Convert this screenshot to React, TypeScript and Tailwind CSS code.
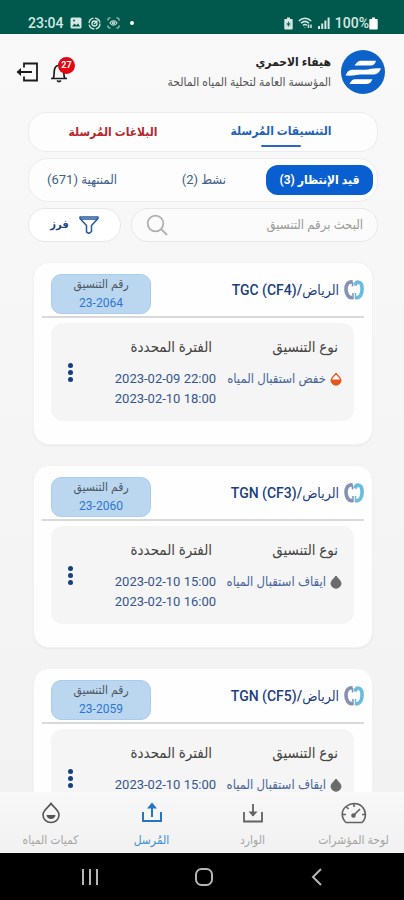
import type { ReactNode } from "react";

type Request = {
  id: string;
  site: string;
  type: string;
  reduced: boolean;
  from: string;
  to: string;
};

const requests: Request[] = [
  {
    id: "23-2064",
    site: "TGC (CF4)/الرياض",
    type: "خفض استقبال المياه",
    reduced: true,
    from: "2023-02-09 22:00",
    to: "2023-02-10 18:00",
  },
  {
    id: "23-2060",
    site: "TGN (CF3)/الرياض",
    type: "ايقاف استقبال المياه",
    reduced: false,
    from: "2023-02-10 15:00",
    to: "2023-02-10 16:00",
  },
  {
    id: "23-2059",
    site: "TGN (CF5)/الرياض",
    type: "ايقاف استقبال المياه",
    reduced: false,
    from: "2023-02-10 15:00",
    to: "2023-02-10 16:00",
  },
];

const StatusBar = () => (
  <div
    dir="ltr"
    className="flex h-[34px] shrink-0 items-end justify-between bg-[#00594c] pr-[26px] pb-1 pl-7 text-[14px] leading-[14px] font-medium text-[#d5e8e4]"
  >
    <div className="flex items-center gap-[6px]">
      <span>23:04</span>
      <svg width="12" height="12" viewBox="0 0 12 12">
        <rect x="0.5" y="0.5" width="11" height="11" rx="1.5" fill="currentColor" />
        <path d="M2 9.5l2.5-3 1.8 1.8L8 6.5l2.2 3z" fill="#00594c" />
        <circle cx="4" cy="3.5" r="1" fill="#00594c" />
      </svg>
      <svg width="13" height="13" viewBox="0 0 13 13" fill="none" stroke="currentColor" strokeWidth="1.3">
        <circle cx="6.5" cy="6.5" r="5.5" strokeDasharray="7 1.6" />
        <circle cx="6.5" cy="6.5" r="2.5" />
        <path d="M6 7l3.5-3.5" />
      </svg>
      <svg width="13" height="12" viewBox="0 0 13 12" fill="none" stroke="currentColor" strokeWidth="1.1">
        <path d="M1 3.5V1h2.5M9.5 1H12v2.5M12 8.5V11H9.5M3.5 11H1V8.5" strokeDasharray="2 1" />
        <path d="M3 6c2-3 5-3 7 0-2 3-5 3-7 0z" />
        <circle cx="6.5" cy="6" r="1" />
      </svg>
      <span className="ml-1 size-1 rounded-full bg-white" />
    </div>
    <div className="flex items-center gap-[5px]">
      <svg width="9" height="13" viewBox="0 0 9 13">
        <path d="M3 0.5h3V2h2q0.7 0 0.7 0.7v9.1q0 0.7-0.7 0.7H1q-0.7 0-0.7-0.7V2.7Q0.3 2 1 2h2z" fill="currentColor" />
        <path d="M4.5 4.5v5M2.6 6.2l3.8 2M2.6 8.2l3.8-2" stroke="#00594c" strokeWidth="0.8" />
      </svg>
      <svg width="15" height="12" viewBox="0 0 15 12" fill="none" stroke="currentColor" strokeWidth="1.5">
        <path d="M0.8 4c3.6-3.7 8.8-3.7 12.4 0M3 6.3c2.4-2.3 5.6-2.3 8 0M5 8.5c1.3-1.2 2.7-1.2 4 0" />
        <path d="M7 10.5v0.5M10.5 11V7.5M13 7.5V11" />
      </svg>
      <svg width="12" height="12" viewBox="0 0 12 12" fill="currentColor">
        <path d="M0 9h2v3H0zM3.2 6.5h2V12h-2zM6.4 3.5h2V12h-2zM9.6 0.5h2V12h-2z" />
      </svg>
      <span className="flex items-center">
        100%
        <svg width="9" height="13" viewBox="0 0 9 13" fill="white">
          <path d="M3 0.5h3V2h2q0.7 0 0.7 0.7v9.1q0 0.7-0.7 0.7H1q-0.7 0-0.7-0.7V2.7Q0.3 2 1 2h2z" />
        </svg>
      </span>
    </div>
  </div>
);

const Header = () => (
  <header className="flex items-center justify-between pt-4 pr-[19px] pl-4">
    <div className="flex items-center gap-[10px]">
      <svg width="44" height="44" viewBox="0 0 44 44" aria-hidden="true">
        <circle cx="22" cy="22" r="22" fill="#0c62c9" />
        <g fill="#fff">
          <path d="M16.5 12q1.2-1.3 3-1.3H35q-1.200 4.800-5 4.800H13.500q1.200-2 3-3.500z" />
          <path d="M4.500 25.500q2-5.500 6.500-5.800h13q3 0 6-0.900 3-0.800 10-0.500-2 6-7 6.200H20q-3 0-6 0.700-3 0.700-9.500 0.300z" />
          <path d="M8.500 34q2-4.800 5.500-4.800h17.500q-1.500 3.200-3 4-1.500 0.800-3.500 0.800z" />
        </g>
      </svg>
      <div>
        <h1 className="text-[12px] leading-5 font-bold text-[#252525]">هيفاء الاحمري</h1>
        <p className="text-[12px] leading-5 text-[#555]">المؤسسة العامة لتحلية المياه المالحة</p>
      </div>
    </div>
    <div className="flex items-center gap-3">
      <button className="relative" aria-label="الإشعارات">
        <svg width="18" height="22" viewBox="0 0 18 22" fill="none" stroke="#1c1c1c" strokeWidth="1.7">
          <path d="M1 17.5h16M3 17.5c1.5-2 1-5 1.300-8C4.700 6 6.500 4.500 9 4.500s4.300 1.500 4.700 5c0.300 3-0.200 6 1.300 8M9 4.500V2.500" />
          <path d="M7 19.5q2 2 4 0" />
        </svg>
        <span className="absolute -top-1 left-2 flex size-[17px] items-center justify-center rounded-full bg-[#e30613] text-[9px] font-bold text-white">
          27
        </span>
      </button>
      <button aria-label="خروج">
        <svg width="22" height="20" viewBox="0 0 22 20" fill="none" stroke="#1c1c1c" strokeWidth="1.8">
          <path d="M8 5.5V1.5h13v17H8v-4M2 10h14" />
          <path d="M0.5 10L5 6v8z" fill="#1c1c1c" stroke="none" />
        </svg>
      </button>
    </div>
  </header>
);

const Filters = () => (
  <div className="mt-[18px] flex flex-col gap-[6px] pr-[26px] pl-7">
    <nav className="flex h-10 rounded-[18px] border border-[#ececec] bg-[#fdfdfd] pr-3 text-[12px] font-bold">
      <button className="flex flex-1 flex-col items-center justify-between pt-2 pb-1 text-[#1d62b8]">
        <span className="leading-5">التنسيقات المُرسلة</span>
        <span className="h-[2px] w-10 rounded-full bg-[#2c67c0]" />
      </button>
      <button className="flex-1 text-[#b5272d]">البلاغات المُرسلة</button>
    </nav>

    <div className="flex h-11 items-center gap-10 rounded-[20px] border border-[#ececec] bg-[#fdfdfd] pr-1 pl-[18px] text-[13px] text-[#3f5f86]">
      <button className="h-[30px] w-[107px] rounded-[12px] bg-[#0a5fd0] text-[12px] font-bold text-white">
        قيد الإنتظار (3)
      </button>
      <button>نشط (2)</button>
      <button className="mr-auto">المنتهية (671)</button>
    </div>

    <div className="flex h-[34px] gap-[10px]">
      <label className="flex min-w-0 flex-1 items-center rounded-full border border-[#e8e8e8] bg-[#fbfbfb] px-[14px]">
        <input
          type="text"
          aria-label="البحث برقم التنسيق"
          placeholder="البحث برقم التنسيق"
          className="min-w-0 flex-1 bg-transparent text-[13px] outline-none placeholder:text-[#9a9a9a]"
        />
        <svg width="22" height="22" viewBox="0 0 22 22" fill="none" stroke="#b0b0b0" strokeWidth="1.8">
          <circle cx="9.5" cy="9.5" r="7.8" />
          <path d="M15 15l6 6" />
        </svg>
      </label>
      <button className="flex w-[93px] items-center justify-center gap-[10px] rounded-full border border-[#e8e8e8] bg-white text-[11px] font-bold text-[#1f4181]">
        <svg width="20" height="18" viewBox="0 0 20 18" fill="none" stroke="#245a9c" strokeWidth="1.5">
          <path d="M1 1h18v1.5L12.5 9.5v6L10 17.500 7.500 16V9.500L1 2.500zM1 3h18" strokeLinejoin="round" />
        </svg>
        <span>فرز</span>
      </button>
    </div>
  </div>
);

const SiteLogo = () => (
  <svg width="20" height="22" viewBox="0 0 20 22" fill="none" strokeWidth="3.6" aria-hidden="true">
    <path d="M8.5 3C4 2 2 6 2 10.5S4.500 19.500 9 18.500" stroke="#8493b5" />
    <path d="M8.5 3v4.5M9 14v6" stroke="#8493b5" strokeWidth="1.5" />
    <path d="M11 6.5C12 2 17.500 1.500 18 8.500S16 19 11.500 19" stroke="#69bcdc" />
    <path d="M11.5 14v6" stroke="#69bcdc" strokeWidth="1.5" />
  </svg>
);

const Drop = ({ reduced }: { reduced: boolean }) => (
  <svg width="12" height="14" viewBox="0 0 12 14" aria-hidden="true">
    <path
      d="M6 1C8 4 11 5.500 11 8.500a5 4.700 0 0 1-10 0C1 5.500 4 4 6 1z"
      fill={reduced ? "#e2581d" : "#6b6b6b"}
      stroke={reduced ? "#e2581d" : "#6b6b6b"}
    />
    {reduced && <path d="M6 2.500C7.500 4.500 9.500 6 9.900 7.500H2.100C2.500 6 4.500 4.500 6 2.500z" fill="#fff" />}
  </svg>
);

const RequestCard = ({ request }: { request: Request }) => (
  <article className="shrink-0 rounded-[16px] border border-[#f3f3f3] bg-[#fefefe] px-2 pt-[11px] pb-[23px] shadow-xs">
    <div className="flex items-center justify-between border-b-2 border-[#d9d9d9] pb-[2px] pl-[9px]">
      <div className="flex items-center gap-[5px] pb-2">
        <SiteLogo />
        <h2 dir="ltr" className="text-[14px] font-medium text-[#1b3f80]">
          {request.site}
        </h2>
      </div>
      <div className="h-10 w-[100px] rounded-[10px] border border-[#a9cdee] bg-[#bbd7f0] text-center text-[12px] leading-[19px]">
        <p className="text-[#4c5660]">رقم التنسيق</p>
        <p className="text-[#2d76ce]">{request.id}</p>
      </div>
    </div>

    <div className="mt-[5px] mr-[10px] ml-[9px] flex h-[98px] rounded-[12px] bg-[#f5f5f5] pt-[14px] pr-3">
      <div className="w-[126px] shrink-0">
        <h3 className="mb-3 pr-1 text-[15px] leading-5 text-[#444]">نوع التنسيق</h3>
        <p className="flex items-center gap-1 text-[13px] leading-5 whitespace-nowrap text-[#4a659b]">
          <Drop reduced={request.reduced} />
          {request.type}
        </p>
      </div>
      <div className="flex-1">
        <h3 className="mb-3 pr-1 text-[15px] leading-5 text-[#444]">الفترة المحددة</h3>
        <p dir="ltr" className="text-right text-[13px] leading-5 whitespace-nowrap text-[#34558e]">
          {request.from}
          <br />
          {request.to}
        </p>
      </div>
      <button className="flex w-[38px] flex-col items-center justify-center gap-[2px] pb-[14px]" aria-label="خيارات">
        <span className="size-[5px] rounded-full bg-[#123f85]" />
        <span className="size-[5px] rounded-full bg-[#123f85]" />
        <span className="size-[5px] rounded-full bg-[#123f85]" />
      </button>
    </div>
  </article>
);

const NavItem = ({ label, active, children }: { label: string; active?: boolean; children: ReactNode }) => (
  <button
    className={`flex flex-1 flex-col items-center gap-[6px] text-[12px] leading-5 whitespace-nowrap ${
      active ? "text-[#3d8ed0]" : "text-[#a5a5a5]"
    }`}
  >
    {children}
    <span>{label}</span>
  </button>
);

const BottomNav = () => (
  <nav className="flex h-[61px] shrink-0 bg-linear-to-b from-[#f8f8f8] to-[#f1f1f1] pt-[10px]">
    <NavItem label="لوحة المؤشرات">
      <svg width="26" height="22" viewBox="0 0 26 22" fill="none" stroke="#626262" strokeWidth="1.6">
        <path d="M5 20.5C0 16 0 8.500 5 4.500s12-4 16 0 5 11.500 0 16z" strokeLinejoin="round" />
        <path d="M13 2v3M5.500 5l2 2M2 12.500h3M24 12.500h-3" />
        <path d="M12 14l7-7" />
        <circle cx="12.5" cy="13.5" r="1.5" fill="#626262" />
      </svg>
    </NavItem>
    <NavItem label="الوارد">
      <svg width="22" height="22" viewBox="0 0 22 22" fill="none" stroke="#626262" strokeWidth="1.8">
        <path d="M2 10v9.500h18V10M11 2v12" />
        <path d="M6.500 9.500L11 14.500l4.500-5z" fill="#626262" stroke="none" />
      </svg>
    </NavItem>
    <NavItem label="المُرسل" active>
      <svg width="22" height="22" viewBox="0 0 22 22" fill="none" stroke="#2476c4" strokeWidth="2">
        <path d="M2 10v9h18v-9M11 4v11" />
        <path d="M6 6.500L11 0.500l5 6z" fill="#2476c4" stroke="none" />
      </svg>
    </NavItem>
    <NavItem label="كميات المياه">
      <svg width="20" height="22" viewBox="0 0 20 22" fill="none" stroke="#555" strokeWidth="1.6">
        <path d="M10 1.500C12.500 5.500 18 8 18 13a8 7.500 0 0 1-16 0C2 8 7.500 5.500 10 1.500z" />
        <path d="M5.500 13h9a4.500 4 0 0 1-9 0z" fill="#555" stroke="none" />
      </svg>
    </NavItem>
  </nav>
);

const SystemNav = () => (
  <div dir="ltr" className="flex h-[47px] shrink-0 items-center justify-between bg-black pr-[77px] pl-20 text-[#b5b5b5]">
    <button aria-label="Recents">
      <svg width="20" height="20" viewBox="0 0 20 20" fill="none" stroke="currentColor" strokeWidth="2">
        <path d="M3 2v16M10 2v16M17 2v16" />
      </svg>
    </button>
    <button aria-label="Home">
      <svg width="20" height="20" viewBox="0 0 20 20" fill="none" stroke="currentColor" strokeWidth="2">
        <rect x="2" y="2" width="16" height="16" rx="5.5" />
      </svg>
    </button>
    <button aria-label="Back">
      <svg width="20" height="20" viewBox="0 0 20 20" fill="none" stroke="currentColor" strokeWidth="2">
        <path d="M14 2L6 10l8 8" />
      </svg>
    </button>
  </div>
);

const App = () => {
  return (
    <div
      dir="rtl"
      className="flex h-screen flex-col overflow-hidden bg-linear-to-b from-[#f9f9f9] to-[#f1f1f1] font-[Roboto,'DejaVu_Sans_Condensed','DejaVu_Sans',sans-serif]"
    >
      <StatusBar />
      <Header />
      <Filters />

      <main className="mt-5 flex min-h-0 flex-1 flex-col gap-5 overflow-hidden pr-[31px] pl-[33px]">
        {requests.map((request) => (
          <RequestCard key={request.id} request={request} />
        ))}
      </main>

      <BottomNav />
      <SystemNav />
    </div>
  );
};

export default App;
